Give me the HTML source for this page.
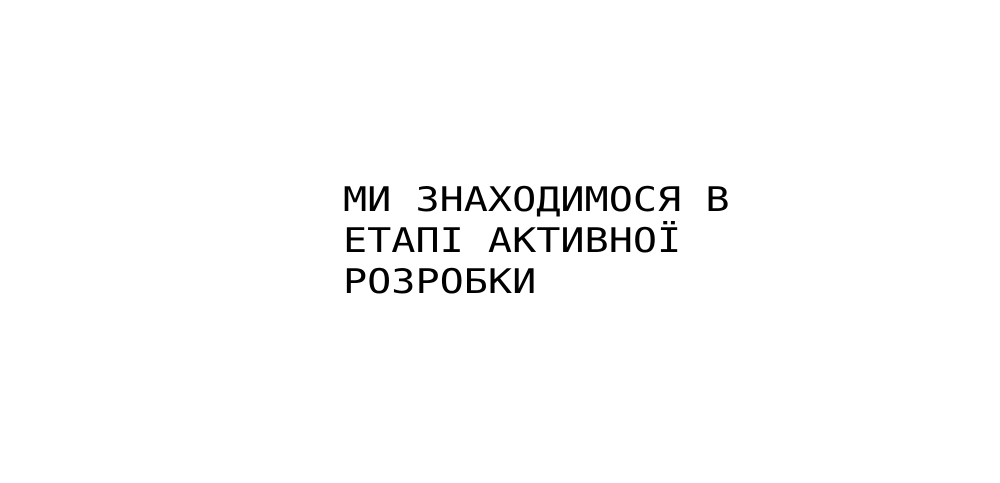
<!DOCTYPE html>
<html><head><meta charset="utf-8"><style>
html,body{margin:0;padding:0;background:#fff;width:1000px;height:483px;overflow:hidden}
.t{position:absolute;left:343px;top:180px;font-family:"DejaVu Sans Mono",monospace;font-size:34px;line-height:41px;color:#000;white-space:nowrap;transform:scaleX(1.18);transform-origin:0 0}
</style></head><body>
<div class="t">МИ ЗНАХОДИМОСЯ В<br>ЕТАПІ АКТИВНОЇ<br>РОЗРОБКИ</div>
</body></html>
